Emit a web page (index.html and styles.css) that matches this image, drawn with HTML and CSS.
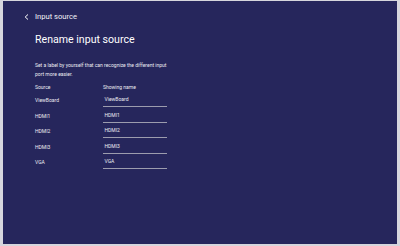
FILE: index.html
```html
<!DOCTYPE html>
<html>
<head>
<meta charset="utf-8">
<link rel="stylesheet" href="styles.css">
</head>
<body>
<div class="panel">
  <div class="topbar">
    <svg class="back" width="5" height="6" viewBox="0 0 5 6"><path d="M4 0.5 L1.2 3 L4 5.5" fill="none" stroke="#ffffff" stroke-width="1"/></svg>
    <span class="crumb">Input source</span>
  </div>
  <div class="content">
    <h1 class="title">Rename input source</h1>
    <p class="desc">Set a label by yourself that can recognize the different input port more easier.</p>
    <div class="table">
      <div class="head">
        <span>Source</span>
        <span>Showing name</span>
      </div>
      <div class="row"><span class="label">ViewBoard</span><span class="field">ViewBoard</span></div>
      <div class="row"><span class="label">HDMI1</span><span class="field">HDMI1</span></div>
      <div class="row"><span class="label">HDMI2</span><span class="field">HDMI2</span></div>
      <div class="row"><span class="label">HDMI3</span><span class="field">HDMI3</span></div>
      <div class="row"><span class="label">VGA</span><span class="field">VGA</span></div>
    </div>
  </div>
</div>
</body>
</html>
```

FILE: styles.css
```css
html, body {
  margin: 0;
  padding: 0;
}
body {
  width: 400px;
  height: 246px;
  background: #d6d6dd;
  font-family: Roboto, "Liberation Sans", sans-serif;
  overflow: hidden;
}
.panel {
  box-sizing: border-box;
  margin: 1px 3px 0 3px;
  width: 394px;
  height: 243px;
  background: #26265c;
  padding: 11px 0 0 21px;
  color: #ececf2;
}
.topbar {
  display: flex;
  align-items: center;
  height: 10px;
}
.back {
  display: block;
  margin-right: 6px;
}
.crumb {
  font-size: 7.6px;
  line-height: 10px;
  color: #f2f2f6;
}
.content {
  padding-left: 11px;
}
.title {
  margin: 11px 0 0 0;
  font-size: 10.6px;
  line-height: 14px;
  font-weight: 400;
  color: #ffffff;
}
.desc {
  margin: 14.4px 0 0 0;
  width: 134px;
  font-size: 5px;
  line-height: 8.6px;
}
.table {
  margin-top: 5.9px;
  font-size: 5px;
}
.head {
  display: grid;
  grid-template-columns: 68px 64px;
  line-height: 7px;
}
.row {
  display: grid;
  grid-template-columns: 68px 64px;
  align-items: end;
  padding-top: 3.6px;
}
.label {
  line-height: 8px;
  padding-bottom: 3px;
}
.field {
  line-height: 8px;
  padding: 0 0 3px 1.5px;
  border-bottom: 1px solid #9c9cae;
}
```
